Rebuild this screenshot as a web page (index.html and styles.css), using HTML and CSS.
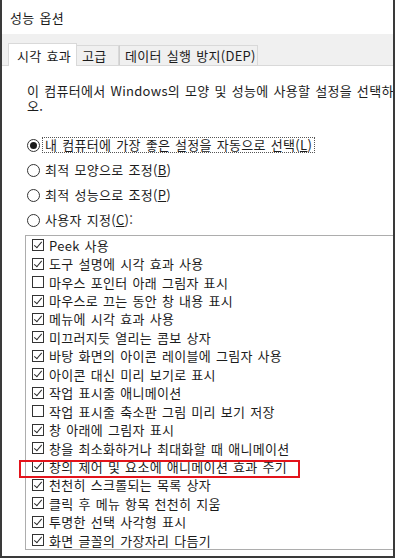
FILE: index.html
```html
<!DOCTYPE html>
<html lang="ko">
<head>
<meta charset="utf-8">
<title>성능 옵션</title>
<link rel="stylesheet" href="styles.css">
</head>
<body>
<div class="window">
  <div class="title">성능 옵션</div>
  <div class="tabstrip">
    <div class="tab active">시각 효과</div>
    <div class="tab tab-adv">고급</div>
    <div class="tab tab-dep">데이터 실행 방지(DEP)</div>
  </div>
  <div class="panel">
    <p class="desc"><span class="line">이 컴퓨터에서 Windows의 모양 및 성능에 사용할 설정을 선택하십시</span><span class="line">오.</span></p>
    <div class="radios">
      <div class="radio"><span class="circle checked"></span><span class="label focus">내 컴퓨터에 가장 좋은 설정을 자동으로 선택(<u>L</u>)</span></div>
      <div class="radio"><span class="circle"></span><span class="label">최적 모양으로 조정(<u>B</u>)</span></div>
      <div class="radio"><span class="circle"></span><span class="label">최적 성능으로 조정(<u>P</u>)</span></div>
      <div class="radio"><span class="circle"></span><span class="label">사용자 지정(<u>C</u>):</span></div>
    </div>
    <div class="listbox">
      <div class="item"><span class="cb on"></span>Peek 사용</div>
      <div class="item"><span class="cb on"></span>도구 설명에 시각 효과 사용</div>
      <div class="item"><span class="cb"></span>마우스 포인터 아래 그림자 표시</div>
      <div class="item"><span class="cb on"></span>마우스로 끄는 동안 창 내용 표시</div>
      <div class="item"><span class="cb on"></span>메뉴에 시각 효과 사용</div>
      <div class="item"><span class="cb on"></span>미끄러지듯 열리는 콤보 상자</div>
      <div class="item"><span class="cb on"></span>바탕 화면의 아이콘 레이블에 그림자 사용</div>
      <div class="item"><span class="cb on"></span>아이콘 대신 미리 보기로 표시</div>
      <div class="item"><span class="cb on"></span>작업 표시줄 애니메이션</div>
      <div class="item"><span class="cb"></span>작업 표시줄 축소판 그림 미리 보기 저장</div>
      <div class="item"><span class="cb on"></span>창 아래에 그림자 표시</div>
      <div class="item"><span class="cb on"></span>창을 최소화하거나 최대화할 때 애니메이션</div>
      <div class="item"><span class="cb on"></span>창의 제어 및 요소에 애니메이션 효과 주기</div>
      <div class="item"><span class="cb on"></span>천천히 스크롤되는 목록 상자</div>
      <div class="item"><span class="cb on"></span>클릭 후 메뉴 항목 천천히 지움</div>
      <div class="item"><span class="cb on"></span>투명한 선택 사각형 표시</div>
      <div class="item"><span class="cb on"></span>화면 글꼴의 가장자리 다듬기</div>
    </div>
  </div>
  <div class="highlight"></div>
</div>
</body>
</html>
```

FILE: styles.css
```css
html, body {
  margin: 0;
  padding: 0;
  background: #ffffff;
}

body {
  width: 400px;
  height: 559px;
  overflow: hidden;
  font-family: "Noto Sans CJK KR", "Noto Sans", sans-serif;
  font-size: 13px;
  letter-spacing: 0.3px;
  word-spacing: 1px;
  color: #1c1c1c;
}

.window {
  position: relative;
  box-sizing: border-box;
  width: 395px;
  height: 558px;
  border-left: 2px solid #3a3a3a;
  border-right: 2px solid #3a3a3a;
  border-bottom: 2px solid #3a3a3a;
  overflow: hidden;
  background: #ffffff;
}

.title {
  height: 34px;
  line-height: 35px;
  padding-left: 8px;
  background: #ffffff;
}

.tabstrip {
  box-sizing: border-box;
  height: 32px;
  display: flex;
  align-items: flex-end;
  padding-left: 6px;
  background: #f0f0f0;
  border-bottom: 1px solid #d9d9d9;
}

.tab {
  box-sizing: border-box;
  height: 20px;
  display: flex;
  align-items: center;
  border: 1px solid #d9d9d9;
  border-bottom: none;
  background: #f0f0f0;
  white-space: nowrap;
}

.tab.active {
  height: 23px;
  width: 69px;
  margin-bottom: -1px;
  padding-left: 8px;
  background: #ffffff;
}

.tab-adv {
  width: 42px;
  padding-left: 5px;
  border-left: none;
}

.tab-dep {
  width: 139px;
  padding-left: 5px;
  border-left-color: #cfcfcf;
}

.panel {
  padding-left: 23px;
}

.desc {
  margin: 17px 0 0 2px;
  line-height: 15px;
}

.desc .line {
  display: block;
  white-space: nowrap;
}

.radios {
  margin-top: 19.5px;
  padding-left: 2px;
}

.radio {
  height: 25px;
  display: flex;
  align-items: center;
  white-space: nowrap;
}

.circle {
  box-sizing: border-box;
  width: 13px;
  height: 13px;
  border: 1px solid #333333;
  border-radius: 50%;
  background: #ffffff;
  display: flex;
  align-items: center;
  justify-content: center;
  margin-right: 5px;
  flex: none;
}

.circle.checked::after {
  content: "";
  width: 7px;
  height: 7px;
  border-radius: 50%;
  background: #1a1a1a;
}

.label {
  line-height: 14px;
}

.label.focus {
  margin-left: -3px;
  padding: 0 2px;
  border: 1px dotted #555555;
}

.listbox {
  margin-top: 2.5px;
  width: 520px;
  border: 1px solid #adadad;
  padding-left: 6px;
}

.item {
  height: 18.44px;
  display: flex;
  align-items: center;
  white-space: nowrap;
}

.cb {
  box-sizing: border-box;
  position: relative;
  width: 12px;
  height: 12px;
  border: 1px solid #333333;
  background: #ffffff;
  margin-right: 5px;
  flex: none;
}

.cb.on::after {
  content: "";
  position: absolute;
  left: 3px;
  top: 0px;
  width: 3px;
  height: 7px;
  border-right: 1.4px solid #2a2a2a;
  border-bottom: 1.4px solid #2a2a2a;
  transform: rotate(40deg);
}

.highlight {
  position: absolute;
  left: 17px;
  top: 460px;
  box-sizing: border-box;
  width: 281px;
  height: 18px;
  border: 2px solid #e3131b;
}
```
